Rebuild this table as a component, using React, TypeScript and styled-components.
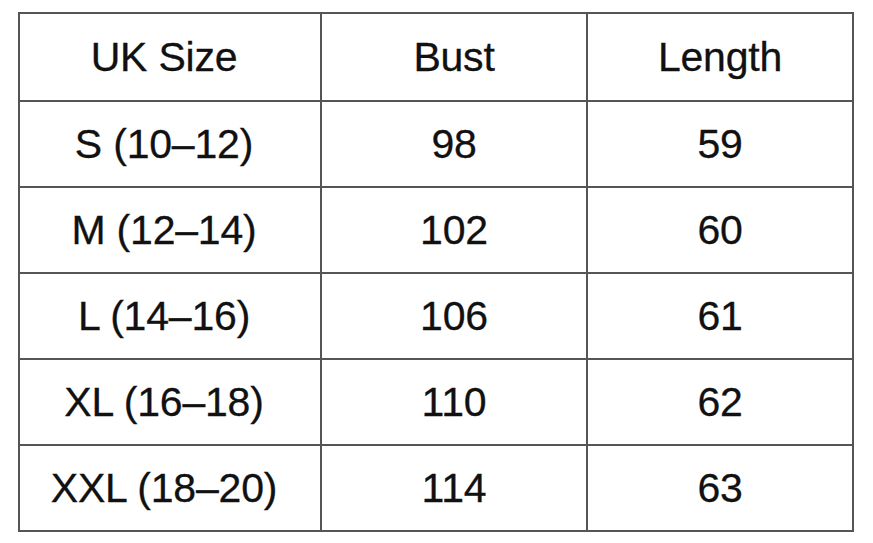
import React from "react";
import styled, { createGlobalStyle } from "styled-components";

const GlobalStyle = createGlobalStyle`
  html, body {
    margin: 0;
    padding: 0;
    background: #fff;
  }
`;

const Page = styled.div`
  width: 873px;
  height: 543px;
  padding: 12px 0 0 18px;
  box-sizing: border-box;
`;

const Table = styled.table`
  border-collapse: collapse;
  width: 834px;
  table-layout: fixed;
  font-family: "Liberation Sans", Arial, sans-serif;
  color: #111;
`;

const Cell = styled.td<{ $header?: boolean; $first?: boolean }>`
  border: 2px solid #555;
  height: ${({ $header }) => ($header ? 86 : 84)}px;
  padding: 0 ${({ $first }) => ($first ? 12 : 0)}px 0 0;
  text-align: center;
  vertical-align: middle;
  font-size: 41px;
  font-weight: 400;
  letter-spacing: -0.2px;
  -webkit-text-stroke: 0.3px #111;
`;

const rows = [
  ["S (10–12)", "98", "59"],
  ["M (12–14)", "102", "60"],
  ["L (14–16)", "106", "61"],
  ["XL (16–18)", "110", "62"],
  ["XXL (18–20)", "114", "63"],
];

export default function App() {
  return (
    <Page>
      <GlobalStyle />
      <Table>
        <colgroup>
          <col style={{ width: 302 }} />
          <col style={{ width: 266 }} />
          <col style={{ width: 266 }} />
        </colgroup>
        <thead>
          <tr>
            <Cell as="th" $header $first>UK Size</Cell>
            <Cell as="th" $header>Bust</Cell>
            <Cell as="th" $header>Length</Cell>
          </tr>
        </thead>
        <tbody>
          {rows.map((r) => (
            <tr key={r[0]}>
              {r.map((c, i) => (
                <Cell key={i} $first={i === 0}>{c}</Cell>
              ))}
            </tr>
          ))}
        </tbody>
      </Table>
    </Page>
  );
}
